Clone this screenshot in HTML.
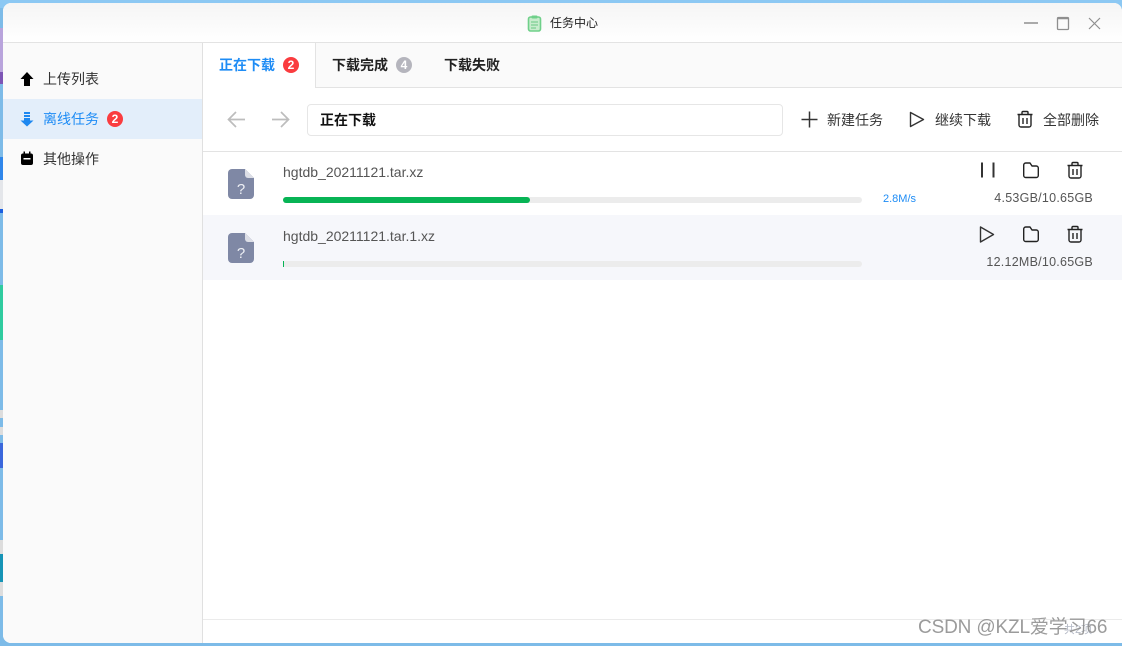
<!DOCTYPE html>
<html><head><meta charset="utf-8">
<style>
*{box-sizing:border-box;margin:0;padding:0}
html,body{width:1122px;height:646px;overflow:hidden;background:#7dbbe8;font-family:"Liberation Sans","Noto Sans CJK SC",sans-serif;font-size:14px;color:#333}
.a{position:absolute}
svg{position:absolute;display:block;overflow:visible}
.t{position:absolute;white-space:nowrap;line-height:20px}
.badge{position:absolute;width:16px;height:16px;border-radius:50%;background:#fa3c3f;color:#fff;font-size:12px;font-weight:bold;text-align:center;line-height:16px}
</style></head><body>
<div class="a" style="left:0;top:0;width:1122px;height:8px;background:#8cc8f3"></div>
<div class="a" style="left:0;top:28px;width:3px;height:56px;background:#b9a4dc"></div>
<div class="a" style="left:0;top:72px;width:3px;height:12px;background:#7d55b5"></div>
<div class="a" style="left:0;top:157px;width:3px;height:23px;background:#2f86ea"></div>
<div class="a" style="left:0;top:180px;width:3px;height:30px;background:#e4e6ea"></div>
<div class="a" style="left:0;top:209px;width:3px;height:4px;background:#1b5fe0"></div>
<div class="a" style="left:0;top:285px;width:3px;height:55px;background:#2fcb9f"></div>
<div class="a" style="left:0;top:410px;width:3px;height:8px;background:#ddd"></div>
<div class="a" style="left:0;top:427px;width:3px;height:8px;background:#ddd"></div>
<div class="a" style="left:0;top:443px;width:3px;height:25px;background:#3a67dc"></div>
<div class="a" style="left:0;top:540px;width:3px;height:14px;background:#ddd"></div>
<div class="a" style="left:0;top:554px;width:3px;height:28px;background:#1694b6"></div>
<div class="a" style="left:0;top:582px;width:3px;height:14px;background:#ddd"></div>

<div class="a" style="left:3px;top:3px;width:1119px;height:640px;background:#fff;border-radius:8px 8px 0 8px;overflow:hidden">
 <div class="a" style="left:0;top:0;width:1119px;height:40px;background:linear-gradient(#f5f5f5,#fff);border-bottom:1px solid #e3e3e3"></div>
 <div class="a" style="left:0;top:40px;width:200px;height:600px;background:#fafafa;border-right:1px solid #e0e0e0"></div>
 <div class="a" style="left:0;top:96px;width:199px;height:40px;background:#e3eefa"></div>
 <div class="a" style="left:312px;top:40px;width:807px;height:45px;background:#fafafa;border-bottom:1px solid #e3e3e3;border-left:1px solid #e3e3e3"></div>
 <div class="a" style="left:200px;top:148px;width:919px;height:1px;background:#e3e3e3"></div>
 <div class="a" style="left:200px;top:212px;width:919px;height:65px;background:#f6f7fb"></div>
 <div class="a" style="left:200px;top:616px;width:919px;height:1px;background:#ebebeb"></div>
</div>

<!-- Title -->
<svg style="left:527px;top:15px" width="16" height="17" viewBox="0 0 16 17"><rect x="1.500" y="2" width="12" height="14" rx="2" fill="#c8eccd" stroke="#6fd08a" stroke-width="1.600"/><rect x="4.500" y="0.500" width="6" height="3" rx="1" fill="#6fd08a"/><path d="M4 7h7M4 10h7M4 13h5" stroke="#68c982" stroke-width="1"/></svg>
<div class="t" style="left:550px;top:13px;font-size:12px;color:#222">任务中心</div>
<svg style="left:1020px;top:14px" width="90" height="20" fill="none" stroke="#8f8f8f"><path d="M4 9h14" stroke-width="1.500"/><rect x="37.500" y="3.500" width="11" height="12" rx="1" stroke-width="1.300"/><path d="M37.500 4.500h11" stroke-width="1.500"/><path d="M69 4l11 11M80 4L69 15" stroke-width="1.200"/></svg>

<!-- Sidebar -->
<svg style="left:20px;top:71px" width="14" height="16" viewBox="0 0 14 16"><path d="M7 1L13.500 8H10V15H4V8H.5Z" fill="#000"/></svg>
<div class="t" style="left:43px;top:69px;color:#333">上传列表</div>
<svg style="left:20px;top:111px" width="14" height="16" viewBox="0 0 14 16" fill="#1e88f0"><rect x="4" y="1" width="6" height="2"/><rect x="4" y="4" width="6" height="2"/><path d="M4 7H10V9.500H13.500L7 15.500.5 9.500H4Z"/></svg>
<div class="t" style="left:43px;top:109px;color:#1e8cf5">离线任务</div>
<div class="badge" style="left:107px;top:111px">2</div>
<svg style="left:20px;top:151px" width="14" height="15" viewBox="0 0 14 15"><path d="M3.500 0.500h1.500v2h4v-2h1.500v2H11a2 2 0 0 1 2 2V12a2 2 0 0 1-2 2H3a2 2 0 0 1-2-2V4.500a2 2 0 0 1 2-2h.5Z" fill="#000"/><rect x="3.500" y="7" width="7" height="1.500" fill="#fff"/></svg>
<div class="t" style="left:43px;top:149px;color:#333">其他操作</div>

<!-- Tabs -->
<div class="t" style="left:219px;top:55px;color:#1e8cf5;font-weight:bold">正在下载</div>
<div class="badge" style="left:283px;top:57px">2</div>
<div class="t" style="left:332px;top:55px;color:#222;font-weight:bold">下载完成</div>
<div class="badge" style="left:396px;top:57px;background:#b5b5bd">4</div>
<div class="t" style="left:444px;top:55px;color:#222;font-weight:bold">下载失败</div>

<!-- Toolbar -->
<svg style="left:227px;top:110px" width="64" height="20" fill="none" stroke="#bdbdbd" stroke-width="1.700"><path d="M18 9.500H1.500M9 2L1.500 9.500 9 17"/><path d="M45 9.500H61.500M54 2l7.500 7.500L54 17"/></svg>
<div class="a" style="left:307px;top:104px;width:476px;height:32px;background:#fff;border:1px solid #e6e6e6;border-radius:4px"></div>
<div class="t" style="left:320px;top:110px;color:#111;font-weight:bold">正在下载</div>
<svg style="left:801px;top:111px" width="17" height="17" fill="none" stroke="#333" stroke-width="1.500"><path d="M8.500 0.500v16M0.500 8.500h16"/></svg>
<div class="t" style="left:827px;top:110px">新建任务</div>
<svg style="left:909px;top:111px" width="16" height="17" fill="none" stroke="#333" stroke-width="1.400" stroke-linejoin="round"><path d="M1.500 1.500L14.500 8.500 1.500 15.500Z"/></svg>
<div class="t" style="left:935px;top:110px">继续下载</div>
<svg style="left:1017px;top:111px" width="16" height="17" fill="none" stroke="#222" stroke-width="1.400"><path d="M0.500 3.500h15M5 3.500V1.500a1 1 0 0 1 1-1h4a1 1 0 0 1 1 1v2M2 3.500V14a2 2 0 0 0 2 2h8a2 2 0 0 0 2-2V3.500M6 7v6M10 7v6"/></svg>
<div class="t" style="left:1043px;top:110px">全部删除</div>

<!-- Row 1 -->
<svg style="left:228px;top:169px" width="26" height="30" viewBox="0 0 26 30"><path d="M4 0H17L26 9V26a4 4 0 0 1-4 4H4a4 4 0 0 1-4-4V4a4 4 0 0 1 4-4Z" fill="#7f88a5"/><path d="M17 0L26 9H20a3 3 0 0 1-3-3Z" fill="#dcdee6"/><text x="13" y="25" font-size="15" fill="#eef0f5" text-anchor="middle" font-family="Liberation Sans">?</text></svg>
<div class="t" style="left:283px;top:162px;font-size:14px;color:#555">hgtdb_20211121.tar.xz</div>
<div class="a" style="left:283px;top:197px;width:579px;height:6px;border-radius:3px;background:#ececec"></div>
<div class="a" style="left:283px;top:197px;width:247px;height:6px;border-radius:3px;background:#07b455"></div>
<div class="t" style="left:883px;top:189px;font-size:11px;color:#1e8cf5">2.8M/s</div>
<div class="t" style="right:29px;top:188px;font-size:12.500px;color:#555;letter-spacing:.25px">4.53GB/10.65GB</div>
<svg style="left:980px;top:162px" width="16" height="17" fill="none" stroke="#333" stroke-width="2"><path d="M2 0.500v15M13.500 0.500v15"/></svg>
<svg style="left:1023px;top:162px" width="16" height="17" fill="none" stroke="#222" stroke-width="1.400" stroke-linejoin="round"><path d="M0.700 3a2 2 0 0 1 2-2H7l2 3h4.300a2 2 0 0 1 2 2V13.500a2 2 0 0 1-2 2H2.700a2 2 0 0 1-2-2Z"/></svg>
<svg style="left:1067px;top:162px" width="16" height="17" fill="none" stroke="#222" stroke-width="1.400"><path d="M0.500 3.500h15M5 3.500V1.500a1 1 0 0 1 1-1h4a1 1 0 0 1 1 1v2M2 3.500V14a2 2 0 0 0 2 2h8a2 2 0 0 0 2-2V3.500M6 7v6M10 7v6"/></svg>

<!-- Row 2 -->
<svg style="left:228px;top:233px" width="26" height="30" viewBox="0 0 26 30"><path d="M4 0H17L26 9V26a4 4 0 0 1-4 4H4a4 4 0 0 1-4-4V4a4 4 0 0 1 4-4Z" fill="#7f88a5"/><path d="M17 0L26 9H20a3 3 0 0 1-3-3Z" fill="#dcdee6"/><text x="13" y="25" font-size="15" fill="#eef0f5" text-anchor="middle" font-family="Liberation Sans">?</text></svg>
<div class="t" style="left:283px;top:226px;font-size:14px;color:#555">hgtdb_20211121.tar.1.xz</div>
<div class="a" style="left:283px;top:261px;width:579px;height:6px;border-radius:3px;background:#ececec"></div>
<div class="a" style="left:283px;top:261px;width:1px;height:6px;background:#07b455"></div>
<div class="t" style="right:29px;top:252px;font-size:12.500px;color:#555;letter-spacing:.25px">12.12MB/10.65GB</div>
<svg style="left:979px;top:226px" width="16" height="17" fill="none" stroke="#333" stroke-width="1.400" stroke-linejoin="round"><path d="M1.500 1L14.500 8.500 1.500 16Z"/></svg>
<svg style="left:1023px;top:226px" width="16" height="17" fill="none" stroke="#222" stroke-width="1.400" stroke-linejoin="round"><path d="M0.700 3a2 2 0 0 1 2-2H7l2 3h4.300a2 2 0 0 1 2 2V13.500a2 2 0 0 1-2 2H2.700a2 2 0 0 1-2-2Z"/></svg>
<svg style="left:1067px;top:226px" width="16" height="17" fill="none" stroke="#222" stroke-width="1.400"><path d="M0.500 3.500h15M5 3.500V1.500a1 1 0 0 1 1-1h4a1 1 0 0 1 1 1v2M2 3.500V14a2 2 0 0 0 2 2h8a2 2 0 0 0 2-2V3.500M6 7v6M10 7v6"/></svg>

<!-- Watermark -->
<div class="t" style="left:1064px;top:620px;font-size:11px;color:#b5bac6">共2项</div>
<div class="t" style="left:918px;top:617px;font-size:19px;line-height:22px;color:#8a8a8a;opacity:.85;letter-spacing:-.15px">CSDN @KZL爱学习66</div>
</body></html>
